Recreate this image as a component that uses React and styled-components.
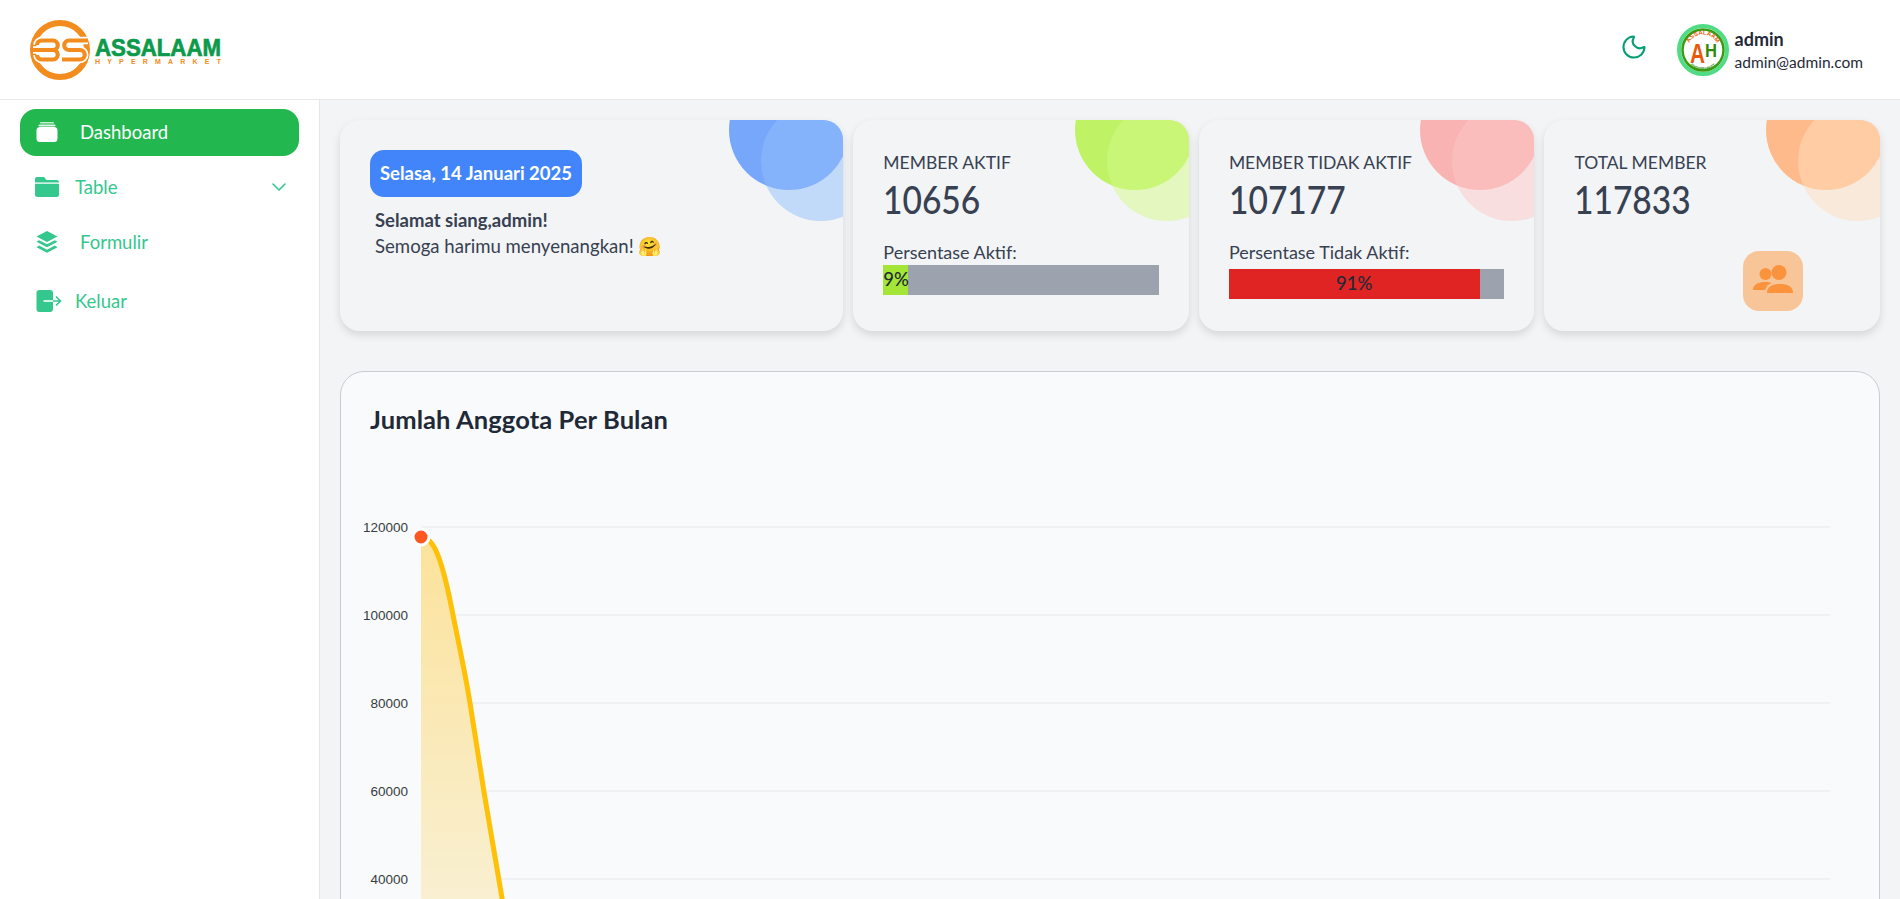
import { ChevronDown, Moon } from 'lucide-react';
import styled, { createGlobalStyle } from 'styled-components';

const GlobalStyle = createGlobalStyle`
  * {
    box-sizing: border-box;
  }

  html,
  body {
    margin: 0;
    height: 100%;
    overflow: hidden;
    background: #f3f4f6;
    font-family: Lato, 'Noto Sans', sans-serif;
    color: #374151;
  }
`;

const MINT = '#34c78e';

const tints = {
  blue: { dark: '#76a7fb', light: 'rgba(145, 192, 252, 0.5)' },
  lime: { dark: '#bff264', light: 'rgba(211, 250, 136, 0.5)' },
  red: { dark: '#f9b3b3', light: 'rgba(253, 200, 198, 0.5)' },
  orange: { dark: '#feba8a', light: 'rgba(255, 222, 190, 0.5)' },
};

const MARK_PATHS = [
  'M37 44 A5 4.5 0 0 1 42 39.5 H53 A4.7 4.7 0 0 1 53 49 H43',
  'M33 49 H53 A4.7 4.7 0 0 1 53 58.5 H42 A5 4.5 0 0 1 37 54',
  'M88 39.5 H69 A4.7 4.7 0 0 0 69 49 H80 A4.7 4.7 0 0 1 80 58.5 H62',
];

function Logo() {
  return (
    <svg width="210" height="70" viewBox="20 14 210 70">
      <circle cx="60" cy="49" r="27" fill="none" stroke="#f28c1e" strokeWidth="6" />
      {MARK_PATHS.map((d) => (
        <path key={d} d={d} fill="none" stroke="#fff" strokeWidth="7.5" />
      ))}
      {MARK_PATHS.map((d) => (
        <path key={`${d}-line`} d={d} fill="none" stroke="#f28c1e" strokeWidth="4.2" />
      ))}
      <text
        x="95"
        y="55"
        fontFamily="Liberation Sans"
        fontWeight="700"
        fontSize="24"
        fill="#0b9a4a"
        stroke="#0b9a4a"
        strokeWidth="0.7"
        textLength="126"
        lengthAdjust="spacingAndGlyphs"
      >
        ASSALAAM
      </text>
      <text
        x="95"
        y="62.5"
        fontFamily="Liberation Sans"
        fontWeight="700"
        fontSize="7"
        fill="#f28c1e"
        textLength="126"
      >
        HYPERMARKET
      </text>
    </svg>
  );
}

function Avatar() {
  return (
    <svg width="52" height="52" viewBox="0 0 52 52">
      <circle cx="26" cy="26" r="24" fill="#fff" stroke="#4fdc85" strokeWidth="4" />
      <circle cx="26" cy="26" r="20.5" fill="#fff" stroke="#3a9a10" strokeWidth="2.5" />
      <defs>
        <path id="avatar-top" d="M10.5 26 A15.5 15.5 0 0 1 41.5 26" />
        <path id="avatar-bottom" d="M8 28 A18 18 0 0 0 44 28" />
      </defs>
      <text fontFamily="Liberation Sans" fontWeight="700" fontSize="6" fill="#e8590c">
        <textPath href="#avatar-top" startOffset="50%" textAnchor="middle">
          ASSALAAM
        </textPath>
      </text>
      <text fontFamily="Liberation Sans" fontWeight="700" fontSize="3.5" fill="#2f8a0c">
        <textPath href="#avatar-bottom" startOffset="50%" textAnchor="middle">
          HYPERMARKET
        </textPath>
      </text>
      <text
        x="13"
        y="39"
        fontFamily="Liberation Sans"
        fontWeight="700"
        fontSize="27"
        fill="#e8590c"
        textLength="15"
        lengthAdjust="spacingAndGlyphs"
      >
        A
      </text>
      <text
        x="28"
        y="33"
        fontFamily="Liberation Sans"
        fontWeight="700"
        fontSize="18"
        fill="#2f8a0c"
        textLength="12"
        lengthAdjust="spacingAndGlyphs"
      >
        H
      </text>
    </svg>
  );
}

function DashboardIcon() {
  return (
    <svg width="22" height="20" viewBox="0 0 22 20" fill="#fff">
      <rect x="4" y="0" width="14" height="1.5" rx="0.7" opacity="0.75" />
      <rect x="2.5" y="2.5" width="17" height="2" rx="1" opacity="0.85" />
      <rect x="0.5" y="5" width="21" height="15" rx="3.5" />
    </svg>
  );
}

function FolderIcon() {
  return (
    <svg width="24" height="20" viewBox="0 0 24 20" fill={MINT}>
      <path d="M2 0 H9 L11.5 3 H21.5 A2.5 2.5 0 0 1 24 5.5 H0 V2 A2 2 0 0 1 2 0 Z" />
      <path d="M0 6.8 H24 V17.5 A2.5 2.5 0 0 1 21.5 20 H2.5 A2.5 2.5 0 0 1 0 17.5 Z" />
    </svg>
  );
}

function LayersIcon() {
  return (
    <svg width="22" height="22" viewBox="0 0 22 22" fill={MINT}>
      <path d="M11 0 L21.5 5.5 L11 11 L0.5 5.5 Z" />
      <path d="M3.2 9.2 L11 13.3 L18.8 9.2 L21.5 10.8 L11 16.3 L0.5 10.8 Z" />
      <path d="M3.2 14.6 L11 18.7 L18.8 14.6 L21.5 16.2 L11 21.7 L0.5 16.2 Z" />
    </svg>
  );
}

function LogoutIcon() {
  return (
    <svg width="26" height="22" viewBox="0 0 26 22" fill="none">
      <rect x="0.5" y="0" width="16.5" height="22" rx="3" fill={MINT} />
      <path d="M7.5 11 H17" stroke="#fff" strokeWidth="1.6" />
      <path d="M17 11 H24.5 M20 6.5 L24.5 11 L20 15.5" stroke={MINT} strokeWidth="1.6" />
    </svg>
  );
}

function UsersIcon() {
  return (
    <svg width="40" height="32" viewBox="0 0 40 32" fill="#fb923c">
      <circle cx="12.5" cy="9" r="6" />
      <circle cx="26" cy="7.5" r="7.5" />
      <path d="M0 25 C0 19 6 17 12.5 17 C15 17 17 17.4 19 18.2 C15 19.5 12.5 21.5 12.5 25 Z" />
      <path d="M14 28 C14 21 20 19 27 19 C34 19 40 21 40 28 Z" />
    </svg>
  );
}

function MemberChart() {
  const ticks = [
    { label: '120000', y: 527 },
    { label: '100000', y: 615 },
    { label: '80000', y: 703 },
    { label: '60000', y: 791 },
    { label: '40000', y: 879 },
  ];
  const curve =
    'M421 537 C426 537 432 541 437 553 C445 572 449 595 453 615 C459 645 465 672 470 703 C475 733 479 762 484 792 C490 828 496 862 502 898 L510 950';

  return (
    <ChartSvg viewBox="341 470 1538 500">
      <defs>
        <linearGradient id="area-fill" x1="0" y1="537" x2="0" y2="899" gradientUnits="userSpaceOnUse">
          <stop offset="0" stopColor="#fce196" />
          <stop offset="1" stopColor="#f9efcf" />
        </linearGradient>
      </defs>
      {ticks.map((tick) => (
        <g key={tick.label}>
          <line x1="421" x2="1830" y1={tick.y} y2={tick.y} stroke="#e5e7eb" strokeWidth="1.2" />
          <text
            x="408"
            y={tick.y + 4.5}
            textAnchor="end"
            fontFamily="Liberation Sans"
            fontSize="13.5"
            fill="#373d3f"
          >
            {tick.label}
          </text>
        </g>
      ))}
      <path d={`${curve} L421 950 Z`} fill="url(#area-fill)" opacity="0.95" />
      <path d={curve} fill="none" stroke="#ffc107" strokeWidth="5" />
      <circle cx="421" cy="537" r="8" fill="#ff5722" stroke="#fff" strokeWidth="3" />
    </ChartSvg>
  );
}

function StatBar({ percent, color, align, offset }) {
  return (
    <BarTrack $offset={offset}>
      <BarFill $color={color} $align={align} style={{ width: `${percent}%` }}>
        {percent}%
      </BarFill>
    </BarTrack>
  );
}

function App() {
  return (
    <Page>
      <GlobalStyle />
      <Header>
        <Logo />
        <HeaderRight>
          <MoonButton>
            <Moon size={28} strokeWidth={1.8} />
          </MoonButton>
          <Profile>
            <Avatar />
            <div>
              <ProfileName>admin</ProfileName>
              <ProfileEmail>admin@admin.com</ProfileEmail>
            </div>
          </Profile>
        </HeaderRight>
      </Header>

      <Body>
        <Sidebar>
          <NavItem $active $gap={22}>
            <DashboardIcon />
            Dashboard
          </NavItem>
          <NavItem $gap={16} $left={15}>
            <FolderIcon />
            Table
            <NavChevron>
              <ChevronDown size={24} strokeWidth={1.6} />
            </NavChevron>
          </NavItem>
          <NavItem $gap={22}>
            <LayersIcon />
            Formulir
          </NavItem>
          <NavItem $gap={13} $top={4}>
            <LogoutIcon />
            Keluar
          </NavItem>
        </Sidebar>

        <Main>
          <CardGrid>
            <Card>
              <Circles $tint="blue" />
              <DateBadge>Selasa, 14 Januari 2025</DateBadge>
              <Greeting>Selamat siang,admin!</Greeting>
              <Wish>Semoga harimu menyenangkan! 🤗</Wish>
            </Card>

            <StatCard>
              <Circles $tint="lime" />
              <StatLabel>MEMBER AKTIF</StatLabel>
              <StatValue>10656</StatValue>
              <BarLabel>Persentase Aktif:</BarLabel>
              <StatBar percent={9} color="#a3e635" align="left" />
            </StatCard>

            <StatCard>
              <Circles $tint="red" />
              <StatLabel>MEMBER TIDAK AKTIF</StatLabel>
              <StatValue>107177</StatValue>
              <BarLabel>Persentase Tidak Aktif:</BarLabel>
              <StatBar percent={91} color="#e02424" align="center" offset={5} />
            </StatCard>

            <StatCard>
              <Circles $tint="orange" />
              <StatLabel>TOTAL MEMBER</StatLabel>
              <StatValue>117833</StatValue>
              <UsersBadge>
                <UsersIcon />
              </UsersBadge>
            </StatCard>
          </CardGrid>

          <ChartCard>
            <ChartTitle>Jumlah Anggota Per Bulan</ChartTitle>
            <MemberChart />
          </ChartCard>
        </Main>
      </Body>
    </Page>
  );
}

export default App;

const Page = styled.div`
  height: 100vh;
  display: flex;
  flex-flow: column;
  overflow: hidden;
`;

const Header = styled.header`
  flex: 0 0 100px;
  display: flex;
  align-items: center;
  justify-content: space-between;
  padding: 0 37px 0 20px;
  background: #fff;
  border-bottom: 1px solid #e5e7eb;
`;

const HeaderRight = styled.div`
  display: flex;
  align-items: center;
  gap: 29px;
`;

const MoonButton = styled.div`
  display: flex;
  margin-bottom: 6px;
  color: #059e75;
`;

const Profile = styled.div`
  display: flex;
  align-items: center;
  gap: 6px;
`;

const ProfileName = styled.div`
  font-size: 18px;
  font-weight: 700;
  line-height: 24px;
  color: #1f2937;
`;

const ProfileEmail = styled.div`
  font-size: 15.5px;
  line-height: 22px;
  color: #1f2937;
`;

const Body = styled.div`
  flex: 1;
  display: flex;
  min-height: 0;
`;

const Sidebar = styled.nav`
  flex: 0 0 320px;
  display: flex;
  flex-flow: column;
  gap: 8px;
  padding: 9px 20px 0;
  background: #fff;
  border-right: 1px solid #e5e7eb;
`;

const NavItem = styled.a`
  height: 47px;
  display: flex;
  align-items: center;
  gap: ${(props) => props.$gap}px;
  margin-top: ${(props) => props.$top || 0}px;
  padding-left: ${(props) => props.$left || 16}px;
  padding-bottom: 2px;
  border-radius: 16px;
  font-size: 18.5px;
  color: ${(props) => (props.$active ? '#fff' : MINT)};
  background: ${(props) => (props.$active ? '#22b84f' : 'transparent')};
`;

const NavChevron = styled.span`
  display: flex;
  margin-left: auto;
  margin-right: 8px;
`;

const Main = styled.main`
  flex: 1;
  min-width: 0;
  padding: 20px;
`;

const CardGrid = styled.section`
  display: grid;
  grid-template-columns: 1.5fr 1fr 1fr 1fr;
  gap: 10px;
`;

const Card = styled.article`
  position: relative;
  height: 211px;
  padding: 30px;
  overflow: hidden;
  border-radius: 20px;
  background: #f3f4f6;
  box-shadow: 0 4px 8px rgba(0, 0, 0, 0.12);
`;

const StatCard = styled(Card)`
  padding-top: 29px;
`;

const Circles = styled.div`
  position: absolute;
  top: -50px;
  right: -6px;
  width: 120px;
  height: 120px;
  border-radius: 50%;
  background: ${(props) => tints[props.$tint].dark};

  &::after {
    content: '';
    position: absolute;
    top: 31px;
    left: 32px;
    width: 120px;
    height: 120px;
    border-radius: 50%;
    background: ${(props) => tints[props.$tint].light};
  }
`;

const DateBadge = styled.div`
  display: inline-block;
  height: 47px;
  padding: 0 10px;
  border-radius: 14px;
  font-size: 18.5px;
  font-weight: 700;
  line-height: 47px;
  color: #fff;
  background: #4285fb;
`;

const Greeting = styled.div`
  margin: 10px 0 0 5px;
  font-size: 18.5px;
  font-weight: 700;
  line-height: 26px;
`;

const Wish = styled.div`
  margin-left: 5px;
  font-size: 18.6px;
  line-height: 27px;
`;

const StatLabel = styled.div`
  font-size: 17.5px;
  line-height: 28px;
`;

const StatValue = styled.div`
  font-size: 39px;
  font-weight: 500;
  line-height: 45px;
  transform: scaleX(0.86);
  transform-origin: left;
`;

const BarLabel = styled.div`
  margin: 18px 0 1px;
  font-size: 18px;
  line-height: 24px;
`;

const BarTrack = styled.div`
  height: 30px;
  margin-top: ${(props) => props.$offset || 0}px;
  background: #9ca3af;
`;

const BarFill = styled.div`
  height: 100%;
  font-size: 18.5px;
  font-weight: 500;
  line-height: 28px;
  white-space: nowrap;
  text-align: ${(props) => props.$align};
  color: #1f2937;
  background: ${(props) => props.$color};
`;

const UsersBadge = styled.div`
  position: absolute;
  top: 131px;
  left: 199px;
  width: 60px;
  height: 60px;
  display: flex;
  align-items: center;
  justify-content: center;
  border-radius: 16px;
  background: #f8c598;
`;

const ChartCard = styled.section`
  margin-top: 40px;
  min-height: 600px;
  border: 1px solid #c9ccd1;
  border-radius: 24px;
  background: #f9fafb;
`;

const ChartTitle = styled.h2`
  height: 98px;
  margin: 0;
  padding: 30px 29px 0;
  font-size: 25.5px;
  font-weight: 700;
  line-height: 34px;
  letter-spacing: 0.1px;
  color: #1f2937;
`;

const ChartSvg = styled.svg`
  display: block;
  width: 1538px;
  height: 500px;
`;
